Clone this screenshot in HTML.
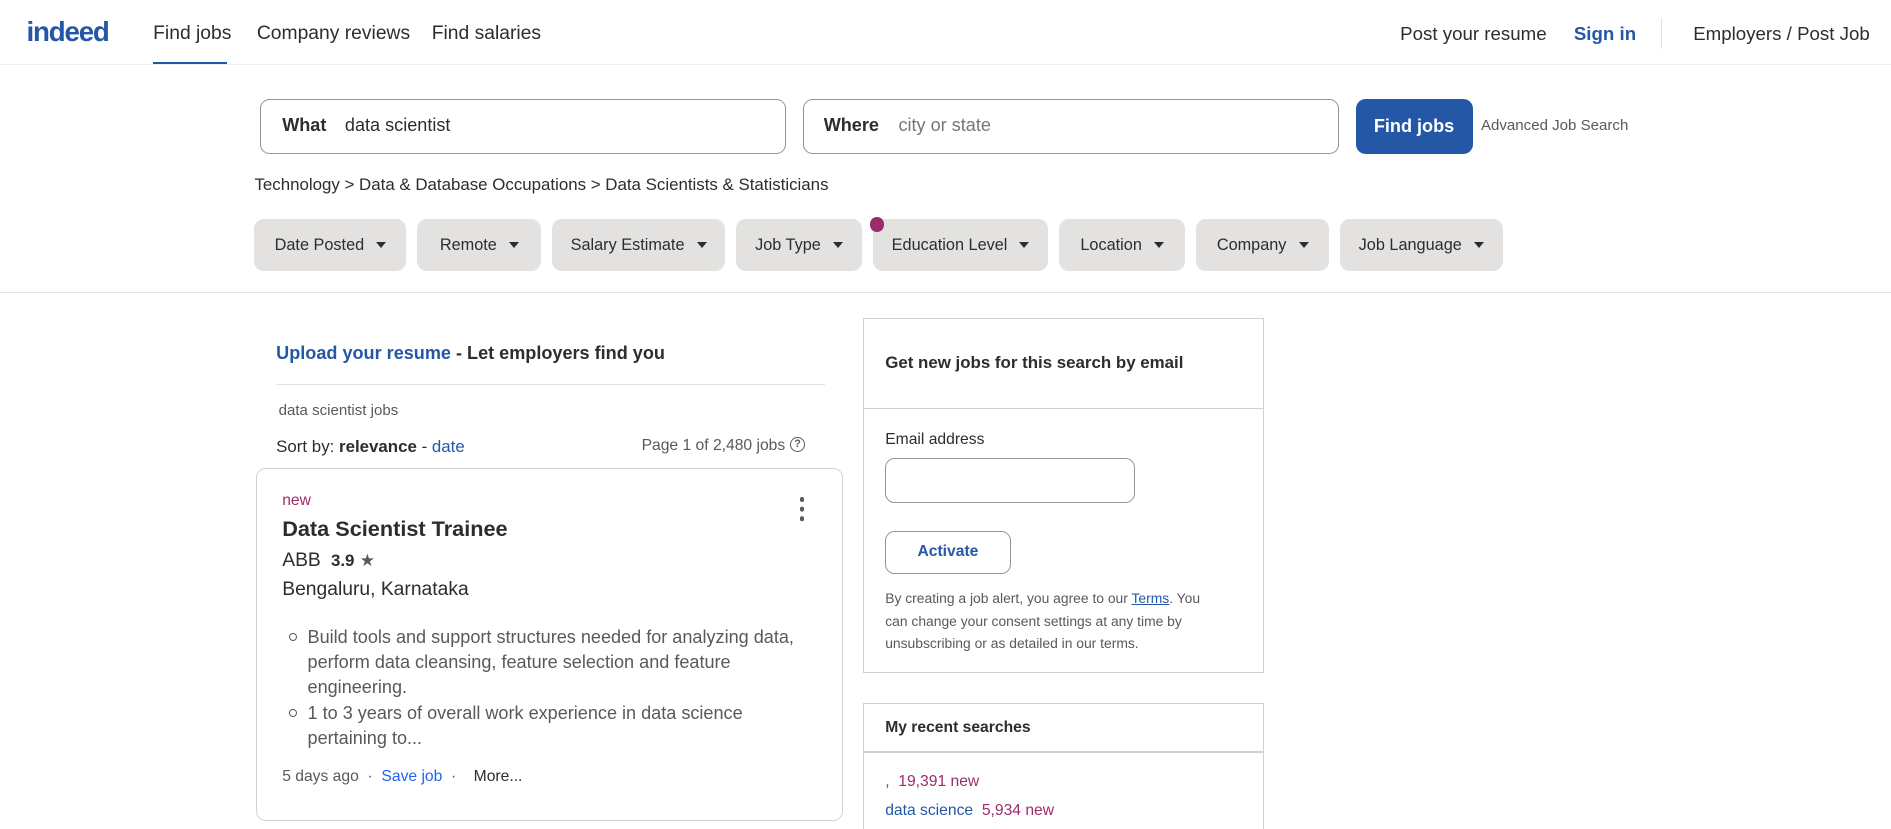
<!DOCTYPE html>
<html><head><meta charset="utf-8"><style>
html{zoom:1.2060}
body{margin:0;width:1568px;height:687px;overflow:hidden;background:#fff;font-family:"Liberation Sans",sans-serif;color:#2d2d2d;position:relative}
.a{position:absolute;white-space:nowrap}
.hdr{position:absolute;left:0;top:0;width:1568px;height:53px;border-bottom:1px solid #f0efee}
.box{position:absolute;border:1px solid #949494;border-radius:8px;box-sizing:border-box}
.f{position:absolute;top:182px;height:43px;background:#e4e2e0;border-radius:8px;font-size:13.5px;color:#2d2d2d;display:flex;align-items:center;justify-content:center}
.f:after{content:"";border-left:4.5px solid transparent;border-right:4.5px solid transparent;border-top:5px solid #2d2d2d;margin-left:10px}
.blue{color:#2557a7}
</style></head><body>
<div class="hdr"></div>
<div class="a" style="left:22px;top:13px;font-size:23px;font-weight:bold;color:#2557a7;letter-spacing:-1px">indeed</div>
<div class="a" style="left:127px;top:19px;font-size:16px">Find jobs</div>
<div class="a" style="left:127px;top:51px;width:61px;height:2px;background:#2557a7"></div>
<div class="a" style="left:213px;top:19px;font-size:16px">Company reviews</div>
<div class="a" style="left:358px;top:19px;font-size:16px">Find salaries</div>
<div class="a" style="left:1161px;top:19px;font-size:15.5px">Post your resume</div>
<div class="a blue" style="left:1305px;top:19px;font-size:15.5px;font-weight:bold">Sign in</div>
<div class="a" style="left:1377px;top:15px;width:1px;height:26px;background:#e4e2e0"></div>
<div class="a" style="left:1404px;top:19px;font-size:15.5px">Employers / Post Job</div>

<div class="box" style="left:216px;top:82px;width:436px;height:46px"></div>
<div class="a" style="left:234px;top:95px;font-size:15px;font-weight:bold">What</div>
<div class="a" style="left:286px;top:95px;font-size:15px">data scientist</div>
<div class="box" style="left:666px;top:82px;width:444px;height:46px"></div>
<div class="a" style="left:683px;top:95px;font-size:15px;font-weight:bold">Where</div>
<div class="a" style="left:745px;top:95px;font-size:15px;color:#767676">city or state</div>
<div class="a" style="left:1124px;top:82px;width:97px;height:46px;background:#2557a7;border-radius:8px;color:#fff;font-weight:bold;font-size:15px;display:flex;align-items:center;justify-content:center">Find jobs</div>
<div class="a" style="left:1228px;top:97px;font-size:12.5px;color:#595959">Advanced Job Search</div>
<div class="a" style="left:211px;top:145px;font-size:14px">Technology &gt; Data &amp; Database Occupations &gt; Data Scientists &amp; Statisticians</div>

<div class="f" style="left:211px;width:126px">Date Posted</div>
<div class="f" style="left:346px;width:103px">Remote</div>
<div class="f" style="left:458px;width:143px">Salary Estimate</div>
<div class="f" style="left:610px;width:105px">Job Type</div>
<div class="f" style="left:724px;width:145px">Education Level</div>
<div class="a" style="left:721px;top:180px;width:12px;height:12px;border-radius:50%;background:#9d2b6b"></div>
<div class="f" style="left:878px;width:105px">Location</div>
<div class="f" style="left:992px;width:110px">Company</div>
<div class="f" style="left:1111px;width:135px">Job Language</div>
<div class="a" style="left:0;top:242px;width:1568px;height:1px;background:#e4e2e0"></div>

<div class="a" style="left:229px;top:284px;font-size:15px;font-weight:bold"><span class="blue">Upload your resume</span> - Let employers find you</div>
<div class="a" style="left:229px;top:318px;width:455px;height:1px;background:#e4e2e0"></div>
<div class="a" style="left:231px;top:333px;font-size:12.5px;color:#595959">data scientist jobs</div>
<div class="a" style="left:229px;top:362px;font-size:14px">Sort by: <b>relevance</b> - <span class="blue">date</span></div>
<div class="a" style="left:532px;top:362px;font-size:13px;color:#595959">Page 1 of 2,480 jobs</div>
<div class="a" style="left:655px;top:362px;width:11px;height:11px;border:1.5px solid #595959;border-radius:50%;font-size:9px;font-weight:bold;text-align:center;line-height:11px;color:#595959">?</div>

<div class="a" style="left:212px;top:388px;width:487px;height:293px;border:1px solid #d4d2d0;border-radius:8px;box-sizing:border-box"></div>
<div class="a" style="left:234px;top:408px;font-size:13px;color:#9d2b6b">new</div>
<div class="a" style="left:663px;top:412px;width:4px;height:4px;border-radius:50%;background:#595959;box-shadow:0 8px 0 #595959,0 16px 0 #595959"></div>
<div class="a" style="left:234px;top:428px;font-size:18px;font-weight:bold">Data Scientist Trainee</div>
<div class="a" style="left:234px;top:456px;font-size:16px">ABB <b style="font-size:14px;margin-left:4px">3.9</b> <span style="color:#595959;font-size:14px">★</span></div>
<div class="a" style="left:234px;top:480px;font-size:16px">Bengaluru, Karnataka</div>
<div class="a" style="left:234px;top:518px;font-size:15px;color:#595959;line-height:21px;white-space:normal;width:450px">
<div style="position:relative;padding-left:21px"><span style="position:absolute;left:6px;top:7px;width:5px;height:5px;border:1px solid #595959;border-radius:50%"></span>Build tools and support structures needed for analyzing data, perform data cleansing, feature selection and feature engineering.</div>
<div style="position:relative;padding-left:21px"><span style="position:absolute;left:6px;top:7px;width:5px;height:5px;border:1px solid #595959;border-radius:50%"></span>1 to 3 years of overall work experience in data science pertaining to...</div>
</div>
<div class="a" style="left:234px;top:637px;font-size:13px;color:#595959">5 days ago &nbsp;·&nbsp; <span style="color:#2164f3">Save job</span> &nbsp;·&nbsp;&nbsp;&nbsp; <span style="color:#2d2d2d">More...</span></div>

<div class="a" style="left:716px;top:264px;width:332px;height:294px;border:1px solid #d4d2d0;box-sizing:border-box"></div>
<div class="a" style="left:734px;top:293px;font-size:14px;font-weight:bold">Get new jobs for this search by email</div>
<div class="a" style="left:716px;top:338px;width:332px;height:1px;background:#d4d2d0"></div>
<div class="a" style="left:734px;top:357px;font-size:13px">Email address</div>
<div class="box" style="left:734px;top:380px;width:207px;height:37px"></div>
<div class="box" style="left:734px;top:440px;width:104px;height:36px;display:flex;align-items:center;justify-content:center;font-size:13px;font-weight:bold;color:#2557a7">Activate</div>
<div class="a" style="left:734px;top:487px;font-size:11.5px;color:#595959;line-height:18.5px;white-space:normal;width:266px">By creating a job alert, you agree to our <u class="blue">Terms</u>. You can change your consent settings at any time by unsubscribing or as detailed in our terms.</div>

<div class="a" style="left:716px;top:583px;width:332px;height:104px;border:1px solid #d4d2d0;border-bottom:none;box-sizing:border-box"></div>
<div class="a" style="left:734px;top:596px;font-size:13px;font-weight:bold">My recent searches</div>
<div class="a" style="left:716px;top:623px;width:332px;height:1px;background:#d4d2d0"></div>
<div class="a" style="left:734px;top:641px;font-size:13px"><span class="blue">,</span> &nbsp;<span style="color:#9d2b6b">19,391 new</span></div>
<div class="a" style="left:734px;top:665px;font-size:13px"><span class="blue">data science</span> &nbsp;<span style="color:#9d2b6b">5,934 new</span></div>
</body></html>
